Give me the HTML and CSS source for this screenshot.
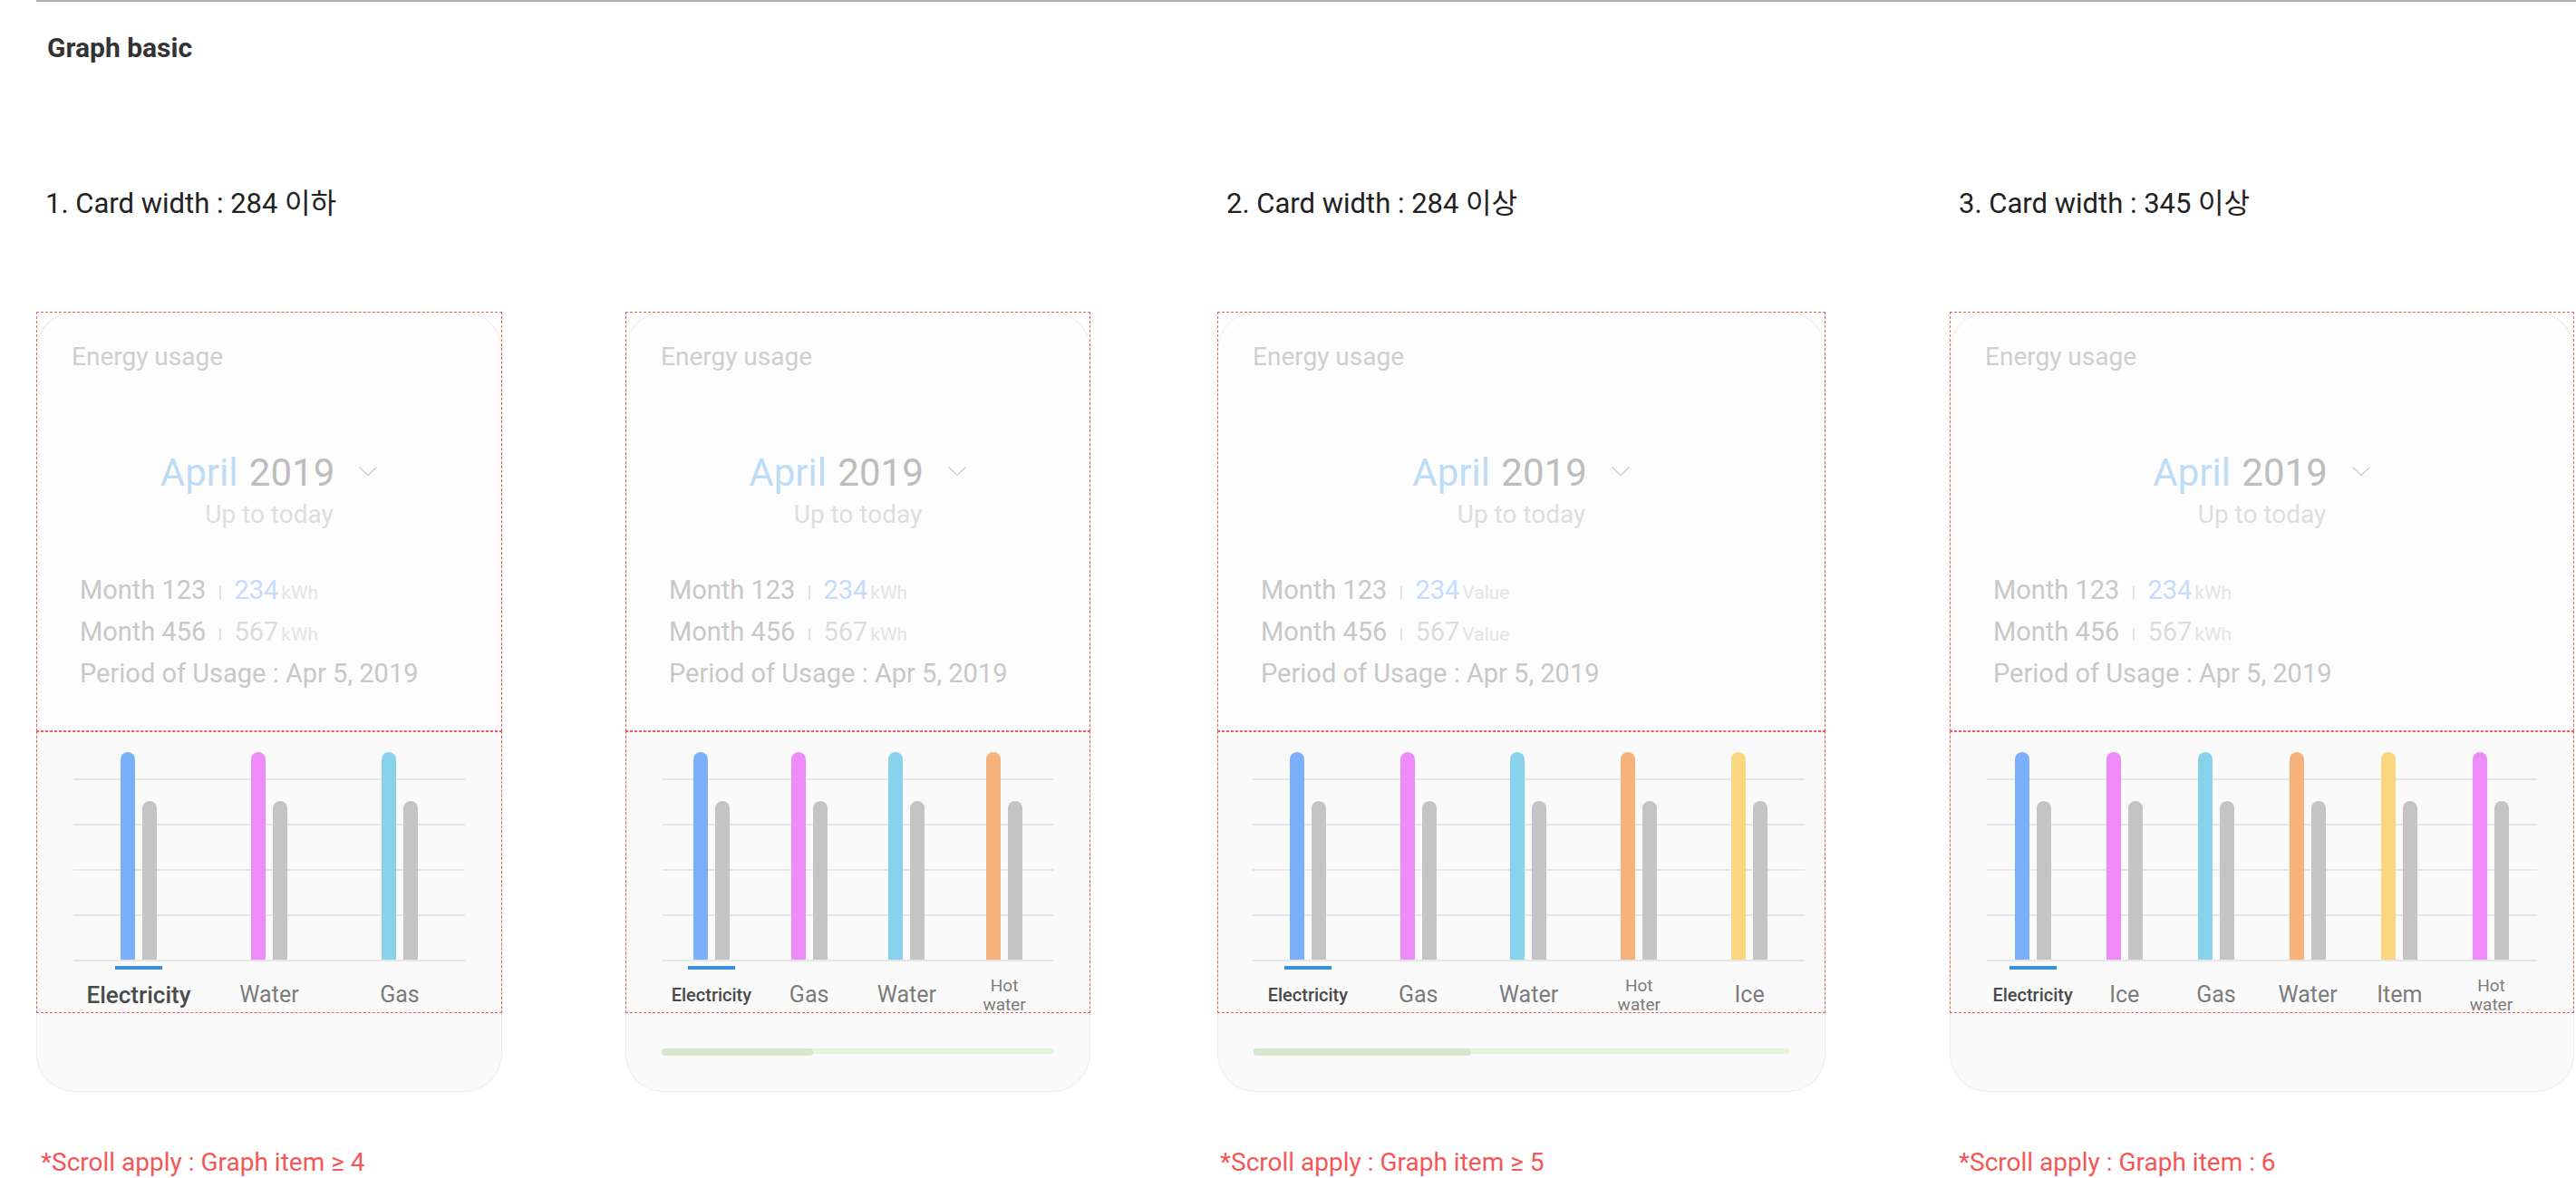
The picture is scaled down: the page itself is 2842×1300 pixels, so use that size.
FILE: index.html
```html
<!DOCTYPE html>
<html lang="en">
<head>
<meta charset="utf-8">
<title>Graph basic</title>
<link rel="stylesheet" href="styles.css">
</head>
<body>
<div class="topline"></div>
<h1 class="page-title">Graph basic</h1>

<div class="sections">
  <section class="col col-1">
    <h2 class="heading">1. Card width : 284 이하</h2>
    <div class="card-row">

      <div class="card w1">
        <div class="card-top">
          <div class="energy">Energy usage</div>
          <div class="date"><span class="month">April</span> <span class="year">2019</span><svg class="chev" width="22" height="12" viewBox="0 0 22 12"><path d="M1.5 1.5 L11 10.5 L20.5 1.5" fill="none" stroke="#d2d2d2" stroke-width="1.6"/></svg></div>
          <div class="sub">Up to today</div>
          <div class="details">
            <div class="line">Month 123<i class="sep"></i><span class="val cur">234</span><span class="unit">kWh</span></div>
            <div class="line">Month 456<i class="sep"></i><span class="val">567</span><span class="unit">kWh</span></div>
            <div class="line">Period of Usage : Apr 5, 2019</div>
          </div>
        </div>
        <div class="card-graph">
          <div class="plot">
            <div class="slot active">
              <div class="bars"><span class="bar c-blue"></span><span class="bar prev"></span></div>
              <div class="ul"></div>
              <div class="label big">Electricity</div>
            </div>
            <div class="slot">
              <div class="bars"><span class="bar c-pink"></span><span class="bar prev"></span></div>
              <div class="ul"></div>
              <div class="label">Water</div>
            </div>
            <div class="slot">
              <div class="bars"><span class="bar c-cyan"></span><span class="bar prev"></span></div>
              <div class="ul"></div>
              <div class="label">Gas</div>
            </div>
          </div>
        </div>
        <div class="card-foot"></div>
      </div>

      <div class="card w2">
        <div class="card-top">
          <div class="energy">Energy usage</div>
          <div class="date"><span class="month">April</span> <span class="year">2019</span><svg class="chev" width="22" height="12" viewBox="0 0 22 12"><path d="M1.5 1.5 L11 10.5 L20.5 1.5" fill="none" stroke="#d2d2d2" stroke-width="1.6"/></svg></div>
          <div class="sub">Up to today</div>
          <div class="details">
            <div class="line">Month 123<i class="sep"></i><span class="val cur">234</span><span class="unit">kWh</span></div>
            <div class="line">Month 456<i class="sep"></i><span class="val">567</span><span class="unit">kWh</span></div>
            <div class="line">Period of Usage : Apr 5, 2019</div>
          </div>
        </div>
        <div class="card-graph">
          <div class="plot">
            <div class="slot active">
              <div class="bars"><span class="bar c-blue"></span><span class="bar prev"></span></div>
              <div class="ul"></div>
              <div class="label">Electricity</div>
            </div>
            <div class="slot">
              <div class="bars"><span class="bar c-pink"></span><span class="bar prev"></span></div>
              <div class="ul"></div>
              <div class="label">Gas</div>
            </div>
            <div class="slot">
              <div class="bars"><span class="bar c-cyan"></span><span class="bar prev"></span></div>
              <div class="ul"></div>
              <div class="label">Water</div>
            </div>
            <div class="slot">
              <div class="bars"><span class="bar c-orange"></span><span class="bar prev"></span></div>
              <div class="ul"></div>
              <div class="label small">Hot<br>water</div>
            </div>
          </div>
        </div>
        <div class="card-foot">
          <div class="scroll"><div class="thumb" style="width:167px"></div></div>
        </div>
      </div>

    </div>
    <p class="note">*Scroll apply : Graph item ≥ 4</p>
  </section>

  <section class="col col-2">
    <h2 class="heading">2. Card width : 284 이상</h2>
    <div class="card-row">
      <div class="card w3">
        <div class="card-top">
          <div class="energy">Energy usage</div>
          <div class="date"><span class="month">April</span> <span class="year">2019</span><svg class="chev" width="22" height="12" viewBox="0 0 22 12"><path d="M1.5 1.5 L11 10.5 L20.5 1.5" fill="none" stroke="#d2d2d2" stroke-width="1.6"/></svg></div>
          <div class="sub">Up to today</div>
          <div class="details">
            <div class="line">Month 123<i class="sep"></i><span class="val cur">234</span><span class="unit">Value</span></div>
            <div class="line">Month 456<i class="sep"></i><span class="val">567</span><span class="unit">Value</span></div>
            <div class="line">Period of Usage : Apr 5, 2019</div>
          </div>
        </div>
        <div class="card-graph">
          <div class="plot plot-narrow-right">
            <div class="slot active">
              <div class="bars"><span class="bar c-blue"></span><span class="bar prev"></span></div>
              <div class="ul"></div>
              <div class="label">Electricity</div>
            </div>
            <div class="slot">
              <div class="bars"><span class="bar c-pink"></span><span class="bar prev"></span></div>
              <div class="ul"></div>
              <div class="label">Gas</div>
            </div>
            <div class="slot">
              <div class="bars"><span class="bar c-cyan"></span><span class="bar prev"></span></div>
              <div class="ul"></div>
              <div class="label">Water</div>
            </div>
            <div class="slot">
              <div class="bars"><span class="bar c-orange"></span><span class="bar prev"></span></div>
              <div class="ul"></div>
              <div class="label small">Hot<br>water</div>
            </div>
            <div class="slot">
              <div class="bars"><span class="bar c-yellow"></span><span class="bar prev"></span></div>
              <div class="ul"></div>
              <div class="label">Ice</div>
            </div>
          </div>
        </div>
        <div class="card-foot">
          <div class="scroll"><div class="thumb" style="width:240px"></div></div>
        </div>
      </div>
    </div>
    <p class="note">*Scroll apply : Graph item ≥ 5</p>
  </section>

  <section class="col col-3">
    <h2 class="heading">3. Card width : 345 이상</h2>
    <div class="card-row">
      <div class="card w4">
        <div class="card-top">
          <div class="energy">Energy usage</div>
          <div class="date"><span class="month">April</span> <span class="year">2019</span><svg class="chev" width="22" height="12" viewBox="0 0 22 12"><path d="M1.5 1.5 L11 10.5 L20.5 1.5" fill="none" stroke="#d2d2d2" stroke-width="1.6"/></svg></div>
          <div class="sub">Up to today</div>
          <div class="details">
            <div class="line">Month 123<i class="sep"></i><span class="val cur">234</span><span class="unit">kWh</span></div>
            <div class="line">Month 456<i class="sep"></i><span class="val">567</span><span class="unit">kWh</span></div>
            <div class="line">Period of Usage : Apr 5, 2019</div>
          </div>
        </div>
        <div class="card-graph">
          <div class="plot">
            <div class="slot active">
              <div class="bars"><span class="bar c-blue"></span><span class="bar prev"></span></div>
              <div class="ul"></div>
              <div class="label">Electricity</div>
            </div>
            <div class="slot">
              <div class="bars"><span class="bar c-pink"></span><span class="bar prev"></span></div>
              <div class="ul"></div>
              <div class="label">Ice</div>
            </div>
            <div class="slot">
              <div class="bars"><span class="bar c-cyan"></span><span class="bar prev"></span></div>
              <div class="ul"></div>
              <div class="label">Gas</div>
            </div>
            <div class="slot">
              <div class="bars"><span class="bar c-orange"></span><span class="bar prev"></span></div>
              <div class="ul"></div>
              <div class="label">Water</div>
            </div>
            <div class="slot">
              <div class="bars"><span class="bar c-yellow"></span><span class="bar prev"></span></div>
              <div class="ul"></div>
              <div class="label">Item</div>
            </div>
            <div class="slot">
              <div class="bars"><span class="bar c-pink"></span><span class="bar prev"></span></div>
              <div class="ul"></div>
              <div class="label small">Hot<br>water</div>
            </div>
          </div>
        </div>
        <div class="card-foot"></div>
      </div>
    </div>
    <p class="note note-3">*Scroll apply : Graph item : 6</p>
  </section>
</div>
</body>
</html>
```

FILE: styles.css
```css
* { box-sizing: border-box; }

html, body {
  margin: 0;
  padding: 0;
  background: #ffffff;
}

body {
  width: 2842px;
  height: 1300px;
  overflow: hidden;
  font-family: Roboto, "Noto Sans CJK KR", sans-serif;
  color: #222;
}

.topline {
  margin-left: 40px;
  height: 2px;
  background: #b0b0b0;
}

.page-title {
  margin: 31px 0 0 52px;
  font-size: 30px;
  line-height: 40px;
  font-weight: 700;
  color: #333;
}

.sections {
  display: flex;
  padding-left: 40px;
  margin-top: 132px;
}

.col-2 { margin-left: 140px; }
.col-3 { margin-left: 137px; }

.heading {
  margin: 0;
  padding-left: 10px;
  font-size: 31px;
  line-height: 40px;
  font-weight: 400;
  color: #222;
}

.card-row {
  display: flex;
  gap: 136px;
  margin-top: 99px;
}

.card {
  height: 861px;
  border-radius: 42px;
  background: linear-gradient(to bottom, #fdfdfd 0, #fdfdfd 463px, #fafafa 463px, #fafafa 100%);
  box-shadow: inset 0 0 0 1px #ececec;
}

.w1 { width: 514px; }
.w2 { width: 513px; }
.w3 { width: 671px; }
.w4 { width: 689px; }

.card-top {
  height: 463px;
  border: 1px dashed #f35a5a;
  padding: 29px 38px 0 38px;
}

.energy {
  font-size: 28px;
  line-height: 40px;
  color: #cfcfcf;
}

.date {
  margin-top: 83px;
  text-align: center;
  font-size: 42px;
  line-height: 50px;
  white-space: nowrap;
}

.month { color: #bddcf6; }
.year { color: #bdbdbd; margin-left: 2px; }

.chev {
  margin-left: 26px;
  vertical-align: 10px;
}

.sub {
  margin-top: 3px;
  text-align: center;
  font-size: 28px;
  line-height: 36px;
  color: #dedede;
}

.details {
  margin-top: 44px;
  margin-left: 9px;
}

.line {
  font-size: 29px;
  line-height: 43px;
  color: #c8c8c8;
  white-space: nowrap;
}

.sep {
  display: inline-block;
  width: 2px;
  height: 14px;
  margin: 0 14px 0 15px;
  background: #e2e2e2;
}

.val { color: #dcdcdc; }
.val.cur { color: #c5dcfb; }

.unit {
  margin-left: 3px;
  font-size: 21px;
  color: #e4e4e4;
}

.card-graph {
  height: 311px;
  border: 1px dashed #f35a5a;
}

.plot {
  display: flex;
  margin: 20px 40px 0 40px;
  background-image: repeating-linear-gradient(to bottom, #e6e6e6 0, #e6e6e6 2px, transparent 2px, transparent 50px);
  background-size: 100% 202px;
  background-position: 0 31px;
  background-repeat: no-repeat;
}

.plot-narrow-right { margin-left: 38px; margin-right: 22px; }

.slot {
  flex: 1;
  display: flex;
  flex-direction: column;
  align-items: center;
}

.bars {
  height: 231px;
  display: flex;
  align-items: flex-end;
  gap: 8px;
}

.bar {
  display: block;
  width: 16px;
  height: 229px;
  border-radius: 8px 8px 0 0;
}

.bar.prev {
  height: 175px;
  background: #c4c4c4;
}

.c-blue { background: #7ab0fb; }
.c-pink { background: #ee8bf8; }
.c-cyan { background: #88d2ec; }
.c-orange { background: #f6b27a; }
.c-yellow { background: #f9d77e; }

.ul {
  width: 52px;
  height: 4px;
  margin-top: 7px;
}

.slot.active .ul { background: #3a90de; }

.label {
  margin-top: 2px;
  height: 52px;
  display: flex;
  align-items: center;
  justify-content: center;
  text-align: center;
  white-space: nowrap;
  font-size: 25px;
  line-height: 30px;
  color: #7c7c7c;
}

.slot.active .label {
  font-size: 20px;
  font-weight: 500;
  color: #4a4a4a;
}

.slot.active .label.big {
  font-size: 26px;
}

.label.small {
  font-size: 19px;
  line-height: 21px;
}

.card-foot {
  height: 87px;
  padding: 40px 40px 0 40px;
}

.scroll {
  height: 6px;
  border-radius: 3px;
  background: #e6f6dd;
}

.thumb {
  height: 8px;
  margin-top: -1px;
  border-radius: 4px;
  background: #d4e6cd;
}

.col-3 .card-foot { padding: 0; }

.note {
  margin: 62px 0 0 5px;
  font-size: 28px;
  line-height: 32px;
  color: #f55656;
}

.col-2 .note { margin-left: 3px; }
.note-3 { margin-left: 10px; }
```
